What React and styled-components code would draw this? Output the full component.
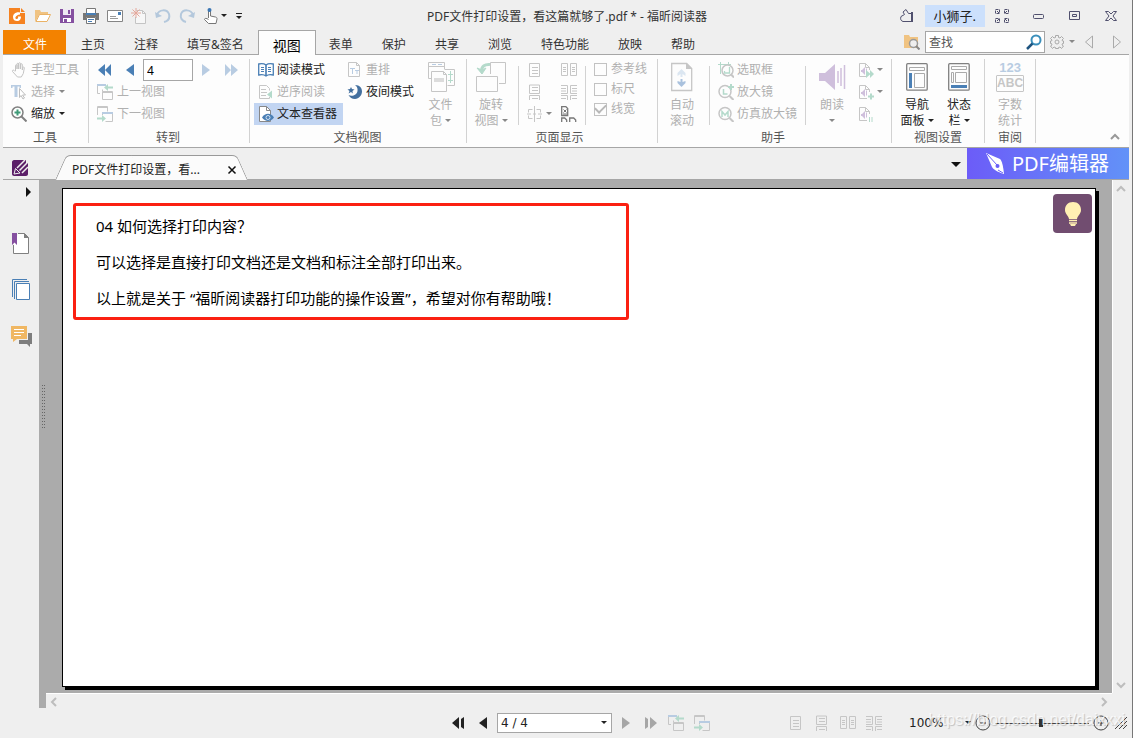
import React, { useState } from 'react';
import styled, { createGlobalStyle } from 'styled-components';

const GlobalStyle = createGlobalStyle`
  * {
    box-sizing: border-box;
  }
  body {
    margin: 0;
    background: #fff;
    color: #333;
    font: 12px/16px 'Noto Sans', 'Noto Sans CJK SC', sans-serif;
  }
  button, input, select {
    margin: 0;
    padding: 0;
    border: 0;
    background: none;
    color: inherit;
    font: inherit;
  }
  svg {
    display: block;
    flex: none;
  }
`;

const GRAY = '#c6c6c6';
const GREEN = '#b4dacb';
const BLUE = '#4a7fb5';
const PALE = '#b8cce2';
const LILAC = '#cfbfdc';

/* ---------- icons ---------- */

const Svg = ({ w = 16, h = 16, children, ...rest }) => (
  <svg width={w} height={h} viewBox={`0 0 ${w} ${h}`} fill='none' aria-hidden='true' {...rest}>
    {children}
  </svg>
);

const LogoIcon = () => (
  <Svg>
    <path d='M0 0h11v5h5v11H0z' fill='#f58220' />
    <path d='M12 0l4 4h-4z' fill='#f58220' />
    <path d='M11 4.500C7 3.500 4 6 4 9s2 4 4 4c3 0 4-2 4-4.500H8.500c1 0 1 2.500-1 2.500C5.500 11 6 7 11 6.500z' fill='#fff' />
  </Svg>
);
const OpenIcon = () => (
  <Svg>
    <path d='M0 14V2h5l1 2h7v3H4z' fill='#f0c382' />
    <path d='M1 13.500L4.500 6.500h11l-3.500 7z' fill='#fff' stroke='#eab266' />
  </Svg>
);
const SaveIcon = () => (
  <Svg>
    <path d='M1 1h14v14H1z' fill='#8550a0' />
    <path d='M4 1h8v6H4z' fill='#efe9f3' />
    <path d='M9 2h2v4H9z' fill='#8550a0' />
    <path d='M4 10h8v4H4z' fill='#fff' />
    <path d='M5 11h3v3H5z' fill='#8550a0' />
  </Svg>
);
const PrintIcon = () => (
  <Svg>
    <path d='M3.500 5V.5h9V5' fill='#fff' stroke='#777' />
    <path d='M0 5h16v7h-3V9H3v3H0z' fill='#777' />
    <path d='M3 5h10v2H3z' fill='#4a7fb5' />
    <path d='M3.500 9.500h9v6h-9z' fill='#fff' stroke='#777' />
    <path d='M5 11.500h6M5 13.500h4' stroke='#4a7fb5' />
  </Svg>
);
const MailIcon = () => (
  <Svg>
    <path d='M.5 2.500h15v11H.5z' fill='#fff' stroke='#858585' />
    <path d='M11 4h3v3h-3z' fill='#4a7fb5' />
    <path d='M3 8.500h6M3 10.500h8' stroke='#999' />
  </Svg>
);
const NewIcon = () => (
  <Svg>
    <path d='M5.500 2.500h6l3 3v10h-10V9' fill='#f7f7f7' stroke='#c4c4c4' />
    <path d='M11.500 2.500v3h3' stroke='#c4c4c4' />
    <path d='M5 0v10M0 5h10M1.500 1.500l7 7M8.500 1.500l-7 7' stroke='#e4a79b' />
  </Svg>
);
const UndoIcon = () => (
  <Svg>
    <path d='M2 7c2-6 10-6 12-1 1 4-1 7-5 8' stroke='#b4c8dc' strokeWidth='2' />
    <path d='M0 4l1 6 6-2z' fill='#b4c8dc' />
  </Svg>
);
const RedoIcon = () => (
  <Svg>
    <path d='M14 7C12 1 4 1 2 6c-1 4 1 7 5 8' stroke='#b4c8dc' strokeWidth='2' />
    <path d='M16 4l-1 6-6-2z' fill='#b4c8dc' />
  </Svg>
);
const TouchIcon = () => (
  <Svg>
    <path d='M5.500 10V3c0-1.500 2-1.500 2 0v5l5 1c1.500.5 1.500 1 1.500 2l-1 4.500H5.500L1.500 11.500c0-1.500 2-1.500 4 0' fill='#fff' stroke='#777' />
    <circle cx='6.500' cy='2' r='2' fill='#3a76b4' />
  </Svg>
);
const CustomizeIcon = () => (
  <Svg w={8} h={8}>
    <path d='M1 1.500h6' stroke='#222' />
    <path d='M1 4h6L4 7z' fill='#222' />
  </Svg>
);

const SkinIcon = () => (
  <Svg>
    <path d='M12 5.500H9.500L7 1.500 4 4l1.500 2.500L2 8.500C1 11 2 13 4 13.500h8' stroke='#50506e' />
    <path d='M12 4h2v10h-2z' fill='#50506e' />
  </Svg>
);
const ExpandIcon = () => (
  <Svg w={14} h={14}>
    <path
      d='M.5.5h4v4h-4zM9.500.5h4v4h-4zM.5 9.500h4v4h-4zM9.500 9.500h4v4h-4z'
      stroke='#50506e'
      strokeDasharray='3 1'
    />
    <path d='M2 2l2 2M12 2l-2 2M2 12l2-2M12 12l-2-2' stroke='#50506e' />
  </Svg>
);
const MinIcon = () => (
  <Svg w={12} h={12}>
    <rect x='.5' y='4.500' width='10' height='4' rx='1' stroke='#50506e' />
  </Svg>
);
const MaxIcon = () => (
  <Svg w={12} h={12}>
    <path d='M.5 1.500h10v8H.5zM3.500 4.500h4v2h-4z' stroke='#50506e' />
  </Svg>
);
const CloseIcon = () => (
  <Svg w={12} h={12}>
    <path d='M.5 1.500h3l2.500 2.500 2.500-2.500h3L8 6l3.500 4.500h-3L6 8l-2.500 2.500h-3L4 6z' stroke='#50506e' />
  </Svg>
);

const FolderSearchIcon = () => (
  <Svg>
    <path d='M0 14V1h5l1 2h8v11z' fill='#f0c382' />
    <circle cx='9.500' cy='9.500' r='4' fill='#eee' stroke='#999' strokeWidth='1.500' />
    <path d='M12 12l3.500 3.500' stroke='#888' strokeWidth='2' />
  </Svg>
);
const SearchIcon = () => (
  <Svg>
    <circle cx='10' cy='6' r='4.500' fill='#fff' stroke='#3b8fbb' strokeWidth='2' />
    <path d='M6.500 9.500L1 15' stroke='#1f5580' strokeWidth='2.500' />
  </Svg>
);
const GearIcon = () => (
  <Svg w={14} h={14}>
    <path
      d='M5.500.5h3v2l1.500.5 1.500-1.500 2 2L12 5l.5 1h1v2.500h-1L12 10l1.500 1-2 2.500L10 12l-1.500.5v1h-3v-1L4 12l-1.500 1.500-2-2.500L2 10l-.5-1.500h-1V6h1L2 5 .5 3.500l2-2L4 3l1.500-.5z'
      stroke='#aaa'
    />
    <circle cx='7' cy='7' r='2' stroke='#aaa' />
  </Svg>
);
const OutlineArrow = ({ right }) => (
  <Svg w={9} h={14}>
    <path d={right ? 'M.5 1v12l7-6z' : 'M8.500 1v12l-7-6z'} stroke='#aaa' />
  </Svg>
);

const Arrow = ({ color, right, w = 12 }) => (
  <Svg w={w} h={14}>
    <path d={right ? 'M0 1v12l8-6z' : `M${w} 1v12l-8-6z`} fill={color} />
  </Svg>
);
const DoubleArrow = ({ color, right }) => (
  <Svg h={14}>
    <path d={right ? 'M2 1v12l6-6zM8 1v12l7-6z' : 'M8 1v12L1 7zM14 1v12L8 7z'} fill={color} />
  </Svg>
);
const EdgeArrow = ({ color, right }) => (
  <Svg w={14} h={14}>
    <path d={right ? 'M1 1l3 2v8l-3 2zM6 1v12l7-6z' : 'M8 1v12L1 7zM13 1v12l-3-2V3z'} fill={color} />
  </Svg>
);

const HandIcon = () => (
  <Svg>
    <path d='M4.500 9V3.500c0-1 1.500-1 1.500 0V7V2c0-1 1.700-1 1.700 0v5V1.500c0-1 1.800-1 1.800 0V7l.2-4.500c0-1 1.600-1 1.600 0V8l.5-2.500c.5-1 1.700-.5 1.500.5l-1 5.500-2 3.500H6.500L1.500 9.500C1 8 2.500 7.500 3.500 9z' stroke='#c4c4c4' />
  </Svg>
);
const SelectIcon = () => (
  <Svg>
    <path d='M0 1h10v3H8.500V2.500h-2V13h-3V2.500H1.500V4H0z' fill={PALE} />
    <path d='M8.500 4.500l6 6.500h-3l2 3-1.500 1-2-3.500-1.500 2z' fill='#fff' stroke='#bdbdbd' />
  </Svg>
);
const ZoomIcon = () => (
  <Svg>
    <circle cx='6.500' cy='6.500' r='5.500' fill='#fff' stroke='#808080' strokeWidth='1.500' />
    <path d='M10.500 10.500l5 5' stroke='#808080' strokeWidth='2' />
    <path d='M3.500 6.500h6M6.500 3.500v6' stroke='#3f9a77' strokeWidth='2' />
  </Svg>
);
const PrevViewIcon = () => (
  <Svg>
    <path d='M3 9.500H.5v-8M5.500 5.500v2' stroke={GRAY} />
    <path d='M0 1h9' stroke={PALE} strokeWidth='2' />
    <path d='M5.500 7.500h10v8h-10zM5.500 8.500h10' stroke={GRAY} />
    <path d='M7 3.500L11 0v2.500h5v2h-5V7z' fill={GREEN} />
  </Svg>
);
const NextViewIcon = () => (
  <Svg>
    <path d='M.5 9V.5h10v5M.5 1.500h10' stroke={GRAY} />
    <path d='M8.500 15.500h7v-9h-10V9' stroke={GRAY} />
    <path d='M5 7h11' stroke={PALE} strokeWidth='2' />
    <path d='M9 12.500L5 9v2.500H0v2h5V16z' fill={GREEN} />
  </Svg>
);
const BookIcon = () => (
  <Svg>
    <path d='M8 3C6 1.500 3 1.500 .7 2v11c3-.8 5.500-.5 7.300 1 1.800-1.500 4.300-1.800 7.300-1V2C13 1.500 10 1.500 8 3zv11' stroke={BLUE} strokeWidth='1.300' />
    <path d='M8 3v11' stroke={BLUE} />
    <path d='M3 5.500h3M3 7.500h3M3 9.500h3M10 5.500h3M10 7.500h3M10 9.500h3' stroke={BLUE} />
  </Svg>
);
const ReverseIcon = () => (
  <Svg>
    <path d='M1.500 1.500h7l3 3v2M11.500 13v1.500h-10v-13' stroke={GRAY} />
    <path d='M3 5.500h5M3 8.500h6M3 11.500h5' stroke={GRAY} />
    <path d='M9 10.500l5-4v8z' fill={GREEN} />
  </Svg>
);
const TextViewIcon = () => (
  <Svg>
    <path d='M1.500.5h7l4 4v11h-11z' fill='#fff' stroke='#888' />
    <path d='M8.500.5v4h4' stroke='#888' />
    <path d='M4 11.500c3-5 9-5 12 0-3 4.500-9 4.500-12 0z' fill={BLUE} />
    <circle cx='10' cy='11.500' r='2' stroke='#cfe0f2' />
  </Svg>
);
const ReflowIcon = () => (
  <Svg>
    <path d='M1.500.5h8l3 3v11h-11zM9.500.5v3h3' stroke={GRAY} />
    <path d='M3 6.500h5M5.500 6v6M8 8.500h4M10 8v4' stroke={PALE} />
  </Svg>
);
const NightIcon = () => (
  <Svg>
    <path d='M8 1c5 0 7 3 7 6.500S12 15 8 15c-3 0-5-1.500-6.500-4C5 13 10 11 10.500 7 11 4 9.500 2 8 1z' fill='#44709f' />
    <path d='M4 3l1 2 2.500.5-2 1.500.3 2.500L4 8 1.500 9.500 2.500 7 .5 5.500 3 5z' fill='#44709f' />
  </Svg>
);
const PortfolioIcon = () => (
  <Svg w={30} h={30}>
    <path d='M7 16.500H2.500v-16h16V7M2 4.500h17M18.500 7.500h10v16h-7' stroke={GRAY} />
    <path d='M6 2.500h4M12 2.500h4' stroke={PALE} />
    <path d='M24.500 9v12M22 12.500h5M22 18.500h5' stroke={GREEN} />
    <path d='M5.500 9.500h12l3 3v17h-15z' fill='#fdfdfd' stroke={GRAY} />
    <path d='M17.500 9.500v3h3' stroke={GRAY} />
    <path d='M8 16h10v4H8z' fill='#dcdcdc' />
  </Svg>
);
const RotateIcon = () => (
  <Svg w={30} h={30}>
    <path d='M14.500 12V.5h15v21H23' stroke={GRAY} />
    <path d='M.5 14.500h21v15H.5z' stroke={GRAY} />
    <path d='M14 2.500C9 2 5.500 4 5.500 9' stroke={GREEN} strokeWidth='3' />
    <path d='M1 6l5 6 4-6-4 2z' fill={GREEN} stroke={GREEN} />
  </Svg>
);
const SinglePageIcon = () => (
  <Svg>
    <path d='M2.500 1.500h10v13h-10zM5 5.500h6M5 8.500h6M5 11.500h6' stroke={GRAY} />
  </Svg>
);
const ContinuousIcon = () => (
  <Svg>
    <path d='M2.500 1v8.500h10V1zM5 3.500h6M5 6.500h6M2.500 16v-4.500h10V16M5 14.500h6' stroke={GRAY} />
  </Svg>
);
const FacingIcon = () => (
  <Svg>
    <path d='M.5 1.500h6v12h-6zM9.500 1.500h6v12h-6zM2 5.500h3M2 7.500h3M2 9.500h3M11 5.500h3M11 7.500h3M11 9.500h3' stroke={GRAY} />
  </Svg>
);
const ContFacingIcon = () => (
  <Svg>
    <path d='M0 1.500h6.500v8H0M0 4.500h5M0 7h5M16 1.500H9.500v8H16M16 4.500h-5M16 7h-5M0 11.500h6.500V16M16 11.500H9.500V16M0 14.500h5M16 14.500h-5' stroke={GRAY} />
  </Svg>
);
const SplitIcon = () => (
  <Svg>
    <path d='M7.500 0v16M5.500 3.500h-4v3M1.500 9.500v3h4M9.500 3.500h4v3M13.500 9.500v3h-4M0 8h4M6 8h3M11 8h4' stroke={GRAY} />
  </Svg>
);
const CoverIcon = () => (
  <Svg>
    <path d='M.7 9.500v-9h4l2 2v7z' stroke='#777' strokeWidth='1.300' />
    <path d='M2.500 3.500l3 3M5.500 3.500l-3 3M2 8h4' stroke='#777' />
    <path d='M.7 16v-4h3l2 2V16M8.700 16v-4h4l2 2V16' stroke='#777' strokeWidth='1.300' />
  </Svg>
);
const AutoScrollIcon = () => (
  <Svg w={22} h={30}>
    <path d='M.7 1.500h15l5 5v22H.7z' stroke={GRAY} strokeWidth='1.300' />
    <path d='M15 1l6 6h-6z' fill={GRAY} />
    <path d='M10.500 7l4 4v3l-3-2v3h-2v-3l-3 2v-3z' fill='#dbe6f1' />
    <path d='M10.500 25l4-4v-2l-3 1v-3h-2v3l-3-1v2z' fill='#a9c1dd' />
  </Svg>
);
const Lens = ({ children }) => (
  <Svg>
    <circle cx='7' cy='7.500' r='6' stroke={GRAY} strokeWidth='1.500' />
    <path d='M11.500 12l4 4' stroke={GRAY} strokeWidth='2' />
    {children}
  </Svg>
);
const MarqueeIcon = () => (
  <Svg>
    <path d='M2.500 0v12M0 2.500h13M10.500 0v4' stroke={GREEN} />
    <circle cx='9.500' cy='8.500' r='5.500' fill='#fdfdfd' stroke={GRAY} strokeWidth='1.500' />
    <path d='M13 12.500l3 3' stroke={GRAY} strokeWidth='2' />
    <path d='M11.500 5v6h-5v-2' stroke={GREEN} strokeWidth='1.300' />
  </Svg>
);
const LoupeIcon = () => (
  <Lens>
    <path d='M5.500 5v5h4' stroke={GREEN} strokeWidth='1.500' />
    <path d='M10 3h6M13 0v6' stroke={GREEN} strokeWidth='2' />
  </Lens>
);
const MagnifierIcon = () => (
  <Lens>
    <path d='M4 11V5.500L7 9l3-3.500V11' stroke={GREEN} strokeWidth='1.500' />
  </Lens>
);
const SpeakIcon = () => (
  <Svg w={28} h={30}>
    <path d='M1 11h6l10-9v26L7 19H1z' fill={LILAC} />
    <path d='M20 9v12M23 6v18M26.500 3v24' stroke={LILAC} strokeWidth='1.500' />
  </Svg>
);
const SpeakPageIcon = ({ children }) => (
  <Svg>
    <path d='M9 14.500H1.500v-13h6l4 4V8M7.500 1.500v4h4' stroke={GRAY} />
    <path d='M3 8h1l3-3v8l-3-3H3zM8 6.500h1v5H8z' fill={LILAC} />
    {children}
  </Svg>
);
const NavPanelIcon = () => (
  <Svg w={22} h={30}>
    <rect x='.7' y='1.700' width='20.500' height='26.500' rx='1' stroke='#808080' strokeWidth='1.300' />
    <path d='M3.500 5.500h15v3h-15zM8.500 11.500h10v14h-10z' stroke='#aaa' />
    <path d='M3 11h3v15H3z' fill={BLUE} />
  </Svg>
);
const StatusPanelIcon = () => (
  <Svg w={22} h={30}>
    <rect x='.7' y='1.700' width='20.500' height='26.500' rx='1' stroke='#808080' strokeWidth='1.300' />
    <path d='M3.500 4.500h15v3h-15zM3.500 10.500h2v10h-2zM7.500 10.500h11v10h-11z' stroke='#aaa' />
    <path d='M3 23h16v3H3z' fill={BLUE} />
  </Svg>
);

const EditorIcon = () => (
  <Svg>
    <path d='M0 2C0 1 1 0 2 0h12v3h2v11c0 1-1 2-2 2H2c-1 0-2-1-2-2z' fill='#5b1f68' />
    <path d='M5 8l8-8M7.500 10.500L16 2M10 13l6-6' stroke='#efefef' strokeWidth='1.500' />
    <path d='M2 14l1.500-5.500L8 13z' stroke='#efefef' />
  </Svg>
);
const BookmarkIcon = () => (
  <Svg w={20} h={22}>
    <path d='M2.500 12v8.500h15V4.500l-4-4H7' fill='#fff' stroke='#808080' />
    <path d='M13 0l5 5h-5z' fill='#808080' />
    <path d='M1 0h5v12l-2.500-2.500L1 12z' fill='#8550a0' />
  </Svg>
);
const PagesIcon = () => (
  <Svg w={20} h={22}>
    <path d='M1.500 18V.5H16M3.500 20V2.500H18' stroke={BLUE} />
    <path d='M5.500 4.500h13v16h-13z' fill='#fff' stroke={BLUE} />
  </Svg>
);
const CommentsIcon = () => (
  <Svg w={22} h={22}>
    <path d='M18 8h4v11h-2v3l-3-3H9v-4h9z' fill='#7d7d7d' />
    <path d='M1 1h16v13H7l-4 3v-3H1z' fill='#f0b763' />
    <path d='M4 4.500h10M4 7.500h10M4 10.500h7' stroke='#fff' />
  </Svg>
);
const PenIcon = () => (
  <Svg w={22} h={24}>
    <path d='M2 1l14 6c2 2 3 6 4 15-7-2-11-5-12-7z' fill='#fff' />
    <path d='M3 2l10 11M19 21l-5-3' stroke='#6a60f8' />
    <circle cx='13.500' cy='14' r='2' fill='#6a60f8' />
  </Svg>
);
const BulbIcon = () => (
  <Svg w={20} h={26}>
    <path d='M10 1c5 0 8 3.500 8 8 0 4-3.500 5.500-4 9H6c-.5-3.500-4-5-4-9 0-4.500 3-8 8-8z' fill='#fff0b3' />
    <path d='M6 19.500h8M6 22h8' stroke='#fff0b3' strokeWidth='1.500' />
    <path d='M7 23h6l-1 2H8z' fill='#fff0b3' />
  </Svg>
);
const Chevron = ({ turn = 0, color = '#bdbdbd' }) => (
  <Svg w={10} h={10} transform={`rotate(${turn})`}>
    <path d='M1 7l4-4 4 4' stroke={color} strokeWidth='2' />
  </Svg>
);
const RoundIcon = ({ plus }) => (
  <Svg>
    <circle cx='8' cy='8' r='7' stroke='#444' />
    <path d={plus ? 'M5 8h6M8 5v6' : 'M5 8h6'} stroke='#333' />
  </Svg>
);
const GripIcon = () => (
  <Svg w={12} h={12}>
    <path d='M0 12L12 0M4 12l8-8M8 12l4-4' stroke='#444' />
  </Svg>
);

/* ---------- layout ---------- */

const Window = styled.div`
  display: flex;
  flex-direction: column;
  min-height: 100vh;
  margin-right: 1px;
  padding: 0 3px;
  border-right: 1px solid #777;
  background: #efefef;
  white-space: nowrap;
`;

const Caret = styled.span`
  flex: none;
  width: 6px;
  margin-bottom: 2px;
  border: 3px solid transparent;
  border-top-color: ${(p) => p.$color || 'currentColor'};
  border-bottom: 0;
`;

const IconButton = styled.button`
  display: flex;
  align-items: center;
  justify-content: center;
  flex: none;
`;

const TitleBar = styled.header`
  display: grid;
  grid-template-columns: 1fr auto 1fr;
  align-items: center;
  height: 30px;
  padding: 2px 6px 0;
`;
const QuickAccess = styled.div`
  display: flex;
  align-items: center;
  gap: 8px;
  ${IconButton}:first-child {
    margin-right: 2px;
  }
`;
const TouchButton = styled(IconButton)`
  gap: 2px;
`;
const Title = styled.h1`
  margin: 0;
  padding: 2px 0 0 2px;
  font-size: 12px;
  font-weight: 400;
`;
const WindowButtons = styled.div`
  display: flex;
  align-items: center;
  justify-content: flex-end;
  gap: 24px;
  height: 26px;
  padding-right: 6px;
`;
const Account = styled.div`
  display: flex;
  align-items: center;
  gap: 10px;
`;
const UserButton = styled.button`
  height: 22px;
  margin-right: -14px;
  padding: 0 9px;
  background: #cce0fc;
  color: #222;
  font-size: 13px;
`;

const TabRow = styled.nav`
  display: flex;
  height: 24px;
`;
const Tab = styled.button`
  height: 24px;
  margin-right: 1px;
  padding: 5px 14px 0;
`;
const FileTab = styled(Tab)`
  padding: 5px 19px 0 20px;
  background: #f38200;
  color: #fff;
`;
const ActiveTab = styled(Tab)`
  position: relative;
  height: 25px;
  margin: 0 -1px;
  border: 1px solid #a6a6a6;
  border-bottom: 0;
  background: #fdfdfd;
  color: #000;
  font-size: 14px;
`;
const FindBar = styled.div`
  display: flex;
  align-items: center;
  gap: 5px;
  margin-left: auto;
  padding-right: 7px;
`;
const FindBox = styled.label`
  display: flex;
  align-items: center;
  width: 120px;
  height: 22px;
  padding: 0 2px 0 3px;
  border: 1px solid #a6a6a6;
  background: #fff;
  input {
    flex: 1;
    min-width: 0;
    padding-top: 2px;
    outline: 0;
  }
  input::placeholder {
    color: #555;
    opacity: 1;
  }
`;
const FindNav = styled.div`
  display: flex;
  gap: 20px;
  margin-left: 4px;
`;

const Ribbon = styled.section`
  display: flex;
  height: 94px;
  border: solid #a6a6a6;
  border-width: 1px 0;
  background: #fdfdfd;
`;
const Group = styled.div`
  flex: none;
  margin: 4px 0;
  padding: ${(p) => p.$pad};
  border-right: 1px solid #d2d2d2;
`;
const GroupBody = styled.div`
  display: flex;
  height: 66px;
`;
const GroupLabel = styled.div`
  margin-top: 7px;
  color: #555;
  line-height: 12px;
  text-align: center;
`;
const Column = styled.div`
  display: flex;
  flex-direction: column;
  align-items: flex-start;
`;
const Tool = styled.button`
  display: flex;
  align-items: center;
  gap: ${(p) => p.$gap || 3}px;
  height: 22px;
  padding: ${(p) => (p.$wide ? '0 6px 0 4px' : '0')};
  background: ${(p) => (p.$on ? '#c2d5f2' : 'none')};
  color: #222;
  &:disabled {
    color: #b0b0b0;
  }
`;
const BigTool = styled.button`
  display: flex;
  flex-direction: column;
  align-items: center;
  gap: 5px;
  width: ${(p) => p.$width}px;
  padding-top: 3px;
  color: #222;
  &:disabled {
    color: #b0b0b0;
  }
  &:disabled ${Caret} {
    border-top-color: #888;
  }
`;
const BigText = styled.span`
  display: flex;
  flex-direction: column;
  align-items: center;
`;
const BigLine = styled.span`
  display: flex;
  align-items: center;
  gap: 3px;
  min-height: 16px;
`;
const Divider = styled.div`
  width: 1px;
  margin: 7px 8px 0;
  background: #d2d2d2;
`;
const PageJump = styled.div`
  display: flex;
  align-items: center;
  gap: 9px;
  height: 22px;
  input {
    width: 50px;
    height: 22px;
    padding: 0 3px;
    border: 1px solid #a6a6a6;
    background: #fff;
    color: #000;
    outline: 0;
  }
`;
const PageModes = styled.div`
  display: grid;
  grid-template-columns: 34px 16px;
  grid-auto-rows: 22px;
`;
const Check = styled.label`
  display: flex;
  align-items: center;
  gap: 4px;
  height: 20px;
  color: #b0b0b0;
  input {
    display: grid;
    place-items: center;
    width: 13px;
    height: 13px;
    border: 1px solid #c2c2c2;
    appearance: none;
  }
  input:checked::before {
    content: '';
    width: 9px;
    height: 5px;
    margin-bottom: 3px;
    border: solid #b8b8b8;
    border-width: 0 0 2px 2px;
    transform: rotate(-45deg);
  }
`;
const SpeakTools = styled(Column)`
  margin-left: 8px;
`;
const WordCount = styled.span`
  display: flex;
  flex-direction: column;
  align-items: center;
  width: 28px;
  height: 30px;
  color: ${PALE};
  font: bold 13px/12px 'Liberation Sans', sans-serif;
  b {
    width: 28px;
    margin-top: 1px;
    border: 1px solid ${GRAY};
    border-radius: 1px;
    color: ${GRAY};
    font-size: 12px;
    line-height: 15px;
  }
`;
const Collapse = styled(IconButton)`
  align-self: flex-end;
  margin: 0 9px 5px auto;
`;

const DocBar = styled.div`
  display: flex;
  align-items: flex-end;
  height: 32px;
  border-bottom: 1px solid #a6a6a6;
`;
const EditorButton = styled(IconButton)`
  margin: 0 27px 3px 9px;
`;
const DocTab = styled.div`
  position: relative;
  z-index: 0;
  display: flex;
  align-items: center;
  justify-content: space-between;
  width: 193px;
  height: 25px;
  margin-bottom: -1px;
  padding: 5px 11px 0 17px;
  color: #222;
  &::before,
  &::after {
    content: '';
    position: absolute;
    z-index: -1;
    top: 0;
    bottom: 0;
    border-top: 1px solid #999;
    background: #fbfbfb;
  }
  &::before {
    left: 0;
    right: 50%;
    border-left: 1px solid #999;
    border-top-left-radius: 5px;
    transform: skewX(-24deg);
    transform-origin: bottom;
  }
  &::after {
    left: 45%;
    right: 0;
    border-right: 1px solid #999;
    border-top-right-radius: 5px;
    transform: skewX(24deg);
    transform-origin: bottom;
  }
`;
const TabList = styled(IconButton)`
  margin: 0 6px 10px auto;
  color: #111;
  ${Caret} {
    width: 10px;
    border-width: 5px 5px 0;
  }
`;
const Banner = styled.a`
  display: flex;
  align-items: center;
  gap: 6px;
  height: 31px;
  padding: 0 20px 0 17px;
  background: linear-gradient(90deg, #6c5cf8, #6292f8);
  color: #fff;
  font-size: 20px;
  text-decoration: none;
`;

const Workspace = styled.div`
  display: flex;
  flex: 1;
`;
const Sidebar = styled.aside`
  display: flex;
  flex-direction: column;
  align-items: center;
  gap: 24px;
  width: 36px;
  padding: 7px 0;
`;
const SidebarToggle = styled(IconButton)`
  align-self: flex-end;
  margin: 0 7px 12px 0;
`;
const Splitter = styled.div`
  display: flex;
  align-items: center;
  justify-content: flex-end;
  width: 7px;
  padding: 0 1px 76px;
  background: #ababab;
  &::before {
    content: '';
    width: 3px;
    height: 43px;
    background: repeating-linear-gradient(#666 0 1px, transparent 1px 3px);
    mask: linear-gradient(90deg, #000 1px, transparent 1px 2px, #000 2px);
  }
`;
const Viewer = styled.main`
  display: grid;
  grid-template: 1fr 15px / 1fr 17px;
  flex: 1;
`;
const Canvas = styled.div`
  display: flex;
  padding: 8px 16px 6px;
  background: #ababab;
`;
const VScroll = styled.div`
  display: flex;
  flex-direction: column;
  align-items: center;
  justify-content: space-between;
  padding: 4px 0 3px;
  border-left: 1px solid #fff;
`;
const HScroll = styled.div`
  display: flex;
  align-items: center;
  justify-content: space-between;
  padding: 2px 3px 0;
  border-top: 1px solid #fff;
`;
const Page = styled.article`
  position: relative;
  flex: 1;
  padding: 14px 10px;
  border: 1px solid #000;
  background: #fff;
  box-shadow: 3px 3px 0 #000;
`;
const Highlight = styled.section`
  max-width: 556px;
  padding: 2px 20px 1px;
  border: 3px solid #fb2012;
  border-radius: 3px;
  color: #000;
  font-size: 15px;
  line-height: 36px;
  p {
    margin: 0;
  }
`;
const TipButton = styled(IconButton)`
  position: absolute;
  top: 5px;
  right: 3px;
  width: 39px;
  height: 39px;
  border-radius: 4px;
  background: #714d70;
`;

const StatusBar = styled.footer`
  position: relative;
  display: flex;
  align-items: center;
  justify-content: flex-end;
  height: 30px;
  padding-right: 2px;
  font-family: 'DejaVu Sans', sans-serif;
`;
const PageNav = styled.div`
  display: flex;
  align-items: center;
  gap: 10px;
  margin-right: 78px;
`;
const Combo = styled.label`
  display: flex;
  align-items: center;
  width: ${(p) => p.$width}px;
  height: 20px;
  color: #222;
  select {
    flex: 1;
    appearance: none;
    outline: 0;
  }
`;
const PageCombo = styled(Combo)`
  padding: 0 4px 0 3px;
  border: 1px solid #a6a6a6;
  background: #fff;
`;
const ViewModes = styled.div`
  display: flex;
  gap: 10px;
  margin-right: 27px;
`;
const ZoomControls = styled.div`
  display: flex;
  align-items: center;
  gap: 4px;
`;
const ZoomRange = styled.input`
  width: 94px;
  height: 10px;
  appearance: none;
  background: linear-gradient(#444, #444) center / 100% 1px no-repeat;
  &::-webkit-slider-thumb {
    appearance: none;
    width: 4px;
    height: 8px;
    background: #333;
  }
`;
const Grip = styled.span`
  margin-left: 6px;
`;
const Watermark = styled.span`
  position: absolute;
  right: 4px;
  bottom: 8px;
  color: rgba(255, 255, 255, 0.75);
  font: 16px/20px 'Liberation Sans', sans-serif;
  text-shadow: 1px 1px 1px rgba(0, 0, 0, 0.2);
  pointer-events: none;
`;

const quickTools = [
  ['福昕阅读器', LogoIcon],
  ['打开', OpenIcon],
  ['保存', SaveIcon],
  ['打印', PrintIcon],
  ['电子邮件', MailIcon],
  ['新建', NewIcon],
];
const tabsAfter = ['表单', '保护', '共享', '浏览', '特色功能', '放映', '帮助'];

const Big = ({ icon, lines, caret, width = 38, disabled }) => (
  <BigTool $width={width} disabled={disabled}>
    {icon}
    <BigText>
      {lines.map((line, i) => (
        <BigLine key={line}>
          {line}
          {caret && i === 1 && <Caret />}
        </BigLine>
      ))}
    </BigText>
  </BigTool>
);

const App = () => {
  const [page, setPage] = useState('4');
  const [find, setFind] = useState('');
  const [zoom, setZoom] = useState(49);

  return (
    <Window>
      <GlobalStyle />
      <TitleBar>
        <QuickAccess>
          {quickTools.map(([label, Icon]) => (
            <IconButton key={label} aria-label={label}>
              <Icon />
            </IconButton>
          ))}
          <IconButton aria-label='撤销' disabled>
            <UndoIcon />
          </IconButton>
          <IconButton aria-label='重做' disabled>
            <RedoIcon />
          </IconButton>
          <TouchButton aria-label='触摸模式'>
            <TouchIcon />
            <Caret $color='#222' />
          </TouchButton>
          <IconButton aria-label='自定义'>
            <CustomizeIcon />
          </IconButton>
        </QuickAccess>
        <Title>PDF文件打印设置，看这篇就够了.pdf * - 福昕阅读器</Title>
        <WindowButtons>
          <Account>
            <IconButton aria-label='皮肤'>
              <SkinIcon />
            </IconButton>
            <UserButton>小狮子.</UserButton>
          </Account>
          <IconButton aria-label='全屏'>
            <ExpandIcon />
          </IconButton>
          <IconButton aria-label='最小化'>
            <MinIcon />
          </IconButton>
          <IconButton aria-label='最大化'>
            <MaxIcon />
          </IconButton>
          <IconButton aria-label='关闭'>
            <CloseIcon />
          </IconButton>
        </WindowButtons>
      </TitleBar>

      <TabRow>
        <FileTab>文件</FileTab>
        <Tab>主页</Tab>
        <Tab>注释</Tab>
        <Tab>填写&amp;签名</Tab>
        <ActiveTab>视图</ActiveTab>
        {tabsAfter.map((tab) => (
          <Tab key={tab}>{tab}</Tab>
        ))}
        <FindBar>
          <IconButton aria-label='高级搜索'>
            <FolderSearchIcon />
          </IconButton>
          <FindBox>
            <input placeholder='查找' aria-label='查找' value={find} onChange={(e) => setFind(e.target.value)} />
            <SearchIcon />
          </FindBox>
          <IconButton aria-label='设置'>
            <GearIcon />
          </IconButton>
          <Caret $color='#888' />
          <FindNav>
            <IconButton aria-label='上一个'>
              <OutlineArrow />
            </IconButton>
            <IconButton aria-label='下一个'>
              <OutlineArrow right />
            </IconButton>
          </FindNav>
        </FindBar>
      </TabRow>

      <Ribbon>
        <Group $pad='0 9px 0 8px'>
          <GroupBody>
            <Column>
              <Tool $gap={4} disabled>
                <HandIcon />
                手型工具
              </Tool>
              <Tool $gap={4} disabled>
                <SelectIcon />
                选择
                <Caret $color='#888' />
              </Tool>
              <Tool $gap={4}>
                <ZoomIcon />
                缩放
                <Caret />
              </Tool>
            </Column>
          </GroupBody>
          <GroupLabel>工具</GroupLabel>
        </Group>

        <Group $pad='0 10px 0 8px'>
          <GroupBody>
            <Column>
              <PageJump>
                <IconButton aria-label='第一页'>
                  <DoubleArrow color={BLUE} />
                </IconButton>
                <IconButton aria-label='上一页'>
                  <Arrow color={BLUE} />
                </IconButton>
                <input aria-label='页码' value={page} onChange={(e) => setPage(e.target.value)} />
                <IconButton aria-label='下一页' disabled>
                  <Arrow right color={PALE} />
                </IconButton>
                <IconButton aria-label='最后一页' disabled>
                  <DoubleArrow right color={PALE} />
                </IconButton>
              </PageJump>
              <Tool $gap={4} disabled>
                <PrevViewIcon />
                上一视图
              </Tool>
              <Tool $gap={4} disabled>
                <NextViewIcon />
                下一视图
              </Tool>
            </Column>
          </GroupBody>
          <GroupLabel>转到</GroupLabel>
        </Group>

        <Group $pad='0 5px 0 4px'>
          <GroupBody>
            <Column>
              <Tool $wide>
                <BookIcon />
                阅读模式
              </Tool>
              <Tool $wide disabled>
                <ReverseIcon />
                逆序阅读
              </Tool>
              <Tool $wide $on>
                <TextViewIcon />
                文本查看器
              </Tool>
            </Column>
            <Column>
              <Tool $wide disabled>
                <ReflowIcon />
                重排
              </Tool>
              <Tool $wide>
                <NightIcon />
                夜间模式
              </Tool>
            </Column>
            <Big width={41} icon={<PortfolioIcon />} lines={['文件', '包']} caret disabled />
          </GroupBody>
          <GroupLabel>文档视图</GroupLabel>
        </Group>

        <Group $pad='0 10px 0 5px'>
          <GroupBody>
            <Big icon={<RotateIcon />} lines={['旋转', '视图']} caret disabled />
            <Divider />
            <PageModes>
              <Tool aria-label='单页' disabled>
                <SinglePageIcon />
              </Tool>
              <Tool aria-label='双页' disabled>
                <FacingIcon />
              </Tool>
              <Tool aria-label='连续' disabled>
                <ContinuousIcon />
              </Tool>
              <Tool aria-label='连续双页' disabled>
                <ContFacingIcon />
              </Tool>
              <Tool aria-label='拆分' disabled>
                <SplitIcon />
                <Caret $color='#888' />
              </Tool>
              <Tool aria-label='独立封面'>
                <CoverIcon />
              </Tool>
            </PageModes>
            <Divider />
            <Column>
              <Check>
                <input type='checkbox' disabled />
                参考线
              </Check>
              <Check>
                <input type='checkbox' disabled />
                标尺
              </Check>
              <Check>
                <input type='checkbox' defaultChecked disabled />
                线宽
              </Check>
            </Column>
          </GroupBody>
          <GroupLabel>页面显示</GroupLabel>
        </Group>

        <Group $pad='0 8px 0 5px'>
          <GroupBody>
            <Big icon={<AutoScrollIcon />} lines={['自动', '滚动']} disabled />
            <Divider />
            <Column>
              <Tool disabled>
                <MarqueeIcon />
                选取框
              </Tool>
              <Tool disabled>
                <LoupeIcon />
                放大镜
              </Tool>
              <Tool disabled>
                <MagnifierIcon />
                仿真放大镜
              </Tool>
            </Column>
            <Divider />
            <Big width={36} icon={<SpeakIcon />} lines={['朗读', '']} caret disabled />
            <SpeakTools>
              <Tool aria-label='朗读文档' disabled>
                <SpeakPageIcon>
                  <path d='M8 8l4 3.500V8l4 4-4 4v-3.500L8 16z' fill={GREEN} />
                </SpeakPageIcon>
                <Caret $color='#888' />
              </Tool>
              <Tool aria-label='音量' disabled>
                <SpeakPageIcon>
                  <path d='M10 12.500h6M13 9.500v6' stroke={GREEN} strokeWidth='2' />
                </SpeakPageIcon>
                <Caret $color='#888' />
              </Tool>
              <Tool aria-label='暂停' disabled>
                <SpeakPageIcon>
                  <path d='M11.500 11v5M14 11v5' stroke={GREEN} />
                </SpeakPageIcon>
              </Tool>
            </SpeakTools>
          </GroupBody>
          <GroupLabel>助手</GroupLabel>
        </Group>

        <Group $pad='0 4px'>
          <GroupBody>
            <Big width={42} icon={<NavPanelIcon />} lines={['导航', '面板']} caret />
            <Big width={42} icon={<StatusPanelIcon />} lines={['状态', '栏']} caret />
          </GroupBody>
          <GroupLabel>视图设置</GroupLabel>
        </Group>

        <Group $pad='0'>
          <GroupBody>
            <Big
              width={50}
              icon={
                <WordCount>
                  123<b>ABC</b>
                </WordCount>
              }
              lines={['字数', '统计']}
              disabled
            />
          </GroupBody>
          <GroupLabel>审阅</GroupLabel>
        </Group>
        <Collapse aria-label='折叠功能区'>
          <Chevron color='#999' />
        </Collapse>
      </Ribbon>

      <DocBar>
        <EditorButton aria-label='编辑器'>
          <EditorIcon />
        </EditorButton>
        <DocTab>
          PDF文件打印设置，看...
          <IconButton aria-label='关闭标签'>
            <Svg w={10} h={10}>
              <path d='M1.500 1.500l7 7M8.500 1.500l-7 7' stroke='#111' strokeWidth='1.500' />
            </Svg>
          </IconButton>
        </DocTab>
        <TabList aria-label='标签列表'>
          <Caret />
        </TabList>
        <Banner href='#editor'>
          <PenIcon />
          PDF编辑器
        </Banner>
      </DocBar>

      <Workspace>
        <Sidebar>
          <SidebarToggle aria-label='展开导航面板'>
            <Svg w={6} h={10}>
              <path d='M0 0v10l5-5z' fill='#111' />
            </Svg>
          </SidebarToggle>
          <IconButton aria-label='书签'>
            <BookmarkIcon />
          </IconButton>
          <IconButton aria-label='页面'>
            <PagesIcon />
          </IconButton>
          <IconButton aria-label='注释'>
            <CommentsIcon />
          </IconButton>
        </Sidebar>
        <Splitter role='separator' />
        <Viewer>
          <Canvas>
            <Page>
              <Highlight>
                <p>04 如何选择打印内容？</p>
                <p>可以选择是直接打印文档还是文档和标注全部打印出来。</p>
                <p>以上就是关于 “福昕阅读器打印功能的操作设置”，希望对你有帮助哦！</p>
              </Highlight>
              <TipButton aria-label='提示'>
                <BulbIcon />
              </TipButton>
            </Page>
          </Canvas>
          <VScroll>
            <Chevron />
            <Chevron turn={180} />
          </VScroll>
          <HScroll>
            <Chevron turn={-90} />
            <Chevron turn={90} />
          </HScroll>
        </Viewer>
      </Workspace>

      <StatusBar>
        <PageNav>
          <IconButton aria-label='第一页'>
            <EdgeArrow color='#222' />
          </IconButton>
          <IconButton aria-label='上一页'>
            <Arrow color='#222' />
          </IconButton>
          <PageCombo $width={115}>
            <select aria-label='页码' defaultValue='4 / 4'>
              <option>1 / 4</option>
              <option>2 / 4</option>
              <option>3 / 4</option>
              <option>4 / 4</option>
            </select>
            <Caret />
          </PageCombo>
          <IconButton aria-label='下一页' disabled>
            <Arrow right color='#a6a6a6' />
          </IconButton>
          <IconButton aria-label='最后一页' disabled>
            <EdgeArrow right color='#a6a6a6' />
          </IconButton>
          <IconButton aria-label='上一视图' disabled>
            <PrevViewIcon />
          </IconButton>
          <IconButton aria-label='下一视图' disabled>
            <NextViewIcon />
          </IconButton>
        </PageNav>
        <ViewModes>
          <IconButton aria-label='单页'>
            <SinglePageIcon />
          </IconButton>
          <IconButton aria-label='连续'>
            <ContinuousIcon />
          </IconButton>
          <IconButton aria-label='双页'>
            <FacingIcon />
          </IconButton>
          <IconButton aria-label='连续双页'>
            <ContFacingIcon />
          </IconButton>
        </ViewModes>
        <ZoomControls>
          <Combo $width={62}>
            <select aria-label='缩放比例' defaultValue='100%'>
              <option>50%</option>
              <option>100%</option>
              <option>200%</option>
            </select>
            <Caret />
          </Combo>
          <IconButton aria-label='缩小'>
            <RoundIcon />
          </IconButton>
          <ZoomRange type='range' aria-label='缩放' value={zoom} onChange={(e) => setZoom(Number(e.target.value))} />
          <IconButton aria-label='放大'>
            <RoundIcon plus />
          </IconButton>
        </ZoomControls>
        <Grip>
          <GripIcon />
        </Grip>
        <Watermark>https://blog.csdn.net/daixxxi</Watermark>
      </StatusBar>
    </Window>
  );
};

export default App;
